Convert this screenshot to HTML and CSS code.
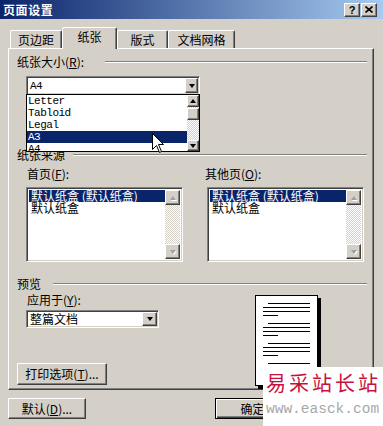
FILE: index.html
```html
<!DOCTYPE html>
<html lang="zh">
<head>
    <meta charset="UTF-8">
    <title>页面设置</title>
    <link rel="stylesheet" href="styles.css">
</head>
<body>
<div class="dialog">
    <div class="titlebar">
        <span class="title">页面设置</span>
        <span class="tbtn">?</span>
        <span class="tbtn">
            <svg width="8" height="7" viewBox="0 0 8 7"><path d="M0.5 0.5 L7.5 6.5 M7.5 0.5 L0.5 6.5" stroke="#000" stroke-width="1.6"/></svg>
        </span>
    </div>

    <div class="tabs">
        <div class="tab t1">页边距</div>
        <div class="tab t2 active">纸张</div>
        <div class="tab t3">版式</div>
        <div class="tab t4">文档网格</div>
    </div>

    <div class="panel">
        <div class="legend"><span class="lg-size">纸张大小(<u>R</u>):</span></div>
        <div class="combo sunken size">
            <span class="mono">A4</span>
            <span class="dropbtn raised"><i class="arr down"></i></span>
            <div class="droplist">
                <ul class="items mono">
                    <li>Letter</li>
                    <li>Tabloid</li>
                    <li>Legal</li>
                    <li class="sel">A3</li>
                    <li>A4</li>
                </ul>
                <div class="vscroll small">
                    <span class="sbtn raised up-btn"><i class="arr up"></i></span>
                    <span class="track gap"></span>
                    <span class="thumb raised"></span>
                    <span class="track"></span>
                    <span class="sbtn raised dn-btn"><i class="arr down"></i></span>
                </div>
            </div>
        </div>

        <div class="legend src"><span class="lg-src">纸张来源</span></div>
        <div class="trays">
            <div class="tray">
                <label>首页(<u>F</u>):</label>
                <div class="listbox sunken">
                    <ul class="items">
                        <li class="sel">默认纸盒 (默认纸盒)</li>
                        <li>默认纸盒</li>
                    </ul>
                    <div class="vscroll">
                        <span class="sbtn raised"><i class="arr up off"></i></span>
                        <span class="track"></span>
                        <span class="sbtn raised"><i class="arr down off"></i></span>
                    </div>
                </div>
            </div>
            <div class="tray right">
                <label>其他页(<u>O</u>):</label>
                <div class="listbox sunken">
                    <ul class="items">
                        <li class="sel">默认纸盒 (默认纸盒)</li>
                        <li>默认纸盒</li>
                    </ul>
                    <div class="vscroll">
                        <span class="sbtn raised"><i class="arr up off"></i></span>
                        <span class="track"></span>
                        <span class="sbtn raised"><i class="arr down off"></i></span>
                    </div>
                </div>
            </div>
        </div>

        <div class="legend pv"><span class="lg-pv">预览</span></div>
        <div class="preview">
            <div class="pv-left">
                <label>应用于(<u>Y</u>):</label>
                <div class="combo sunken apply">
                    <span>整篇文档</span>
                    <span class="dropbtn raised"><i class="arr down"></i></span>
                </div>
                <button class="btn print">打印选项(<u>T</u>)...</button>
            </div>
            <div class="page">
                <div class="para"><i class="ln ind"></i><i class="ln"></i><i class="ln"></i><i class="ln short"></i></div>
                <div class="para"><i class="ln ind"></i><i class="ln"></i><i class="ln"></i><i class="ln short"></i></div>
                <div class="para"><i class="ln ind"></i><i class="ln"></i><i class="ln"></i><i class="ln short"></i></div>
                <div class="para"><i class="ln ind"></i><i class="ln"></i><i class="ln"></i><i class="ln short"></i></div>
            </div>
        </div>
    </div>

    <div class="footer">
        <button class="btn dflt">默认(<u>D</u>)...</button>
        <button class="btn ok">确定</button>
        <button class="btn">取消</button>
    </div>

    <svg class="cursor" width="13" height="21" viewBox="0 0 13 21">
        <path d="M0.5 0.5 L0.5 16.5 L4.5 12.5 L7.5 19.5 L9.5 18.5 L6.5 11.5 L11.5 11.5 Z" fill="#fff" stroke="#000" stroke-width="1"/>
    </svg>

    <div class="watermark">
        <div class="wm-cn">易采站长站</div>
        <div class="wm-en">www.easck.com</div>
    </div>
</div>
</body>
</html>
```

FILE: styles.css
```css
* { box-sizing: border-box; }
body { margin: 0; background: #d4d0c8; font-family: "Noto Sans CJK SC", "Liberation Sans", sans-serif; font-size: 12px; line-height: 12px; color: #000; }
ul { list-style: none; margin: 0; padding: 0; }
u { text-decoration: underline; }

.dialog { position: relative; width: 383px; height: 426px; overflow: hidden; }

/* classic 3d borders */
.raised { background: #d4d0c8; border: 1px solid; border-color: #fff #404040 #404040 #fff; box-shadow: inset -1px -1px #808080; }
.sunken { background: #fff; border: 1px solid; border-color: #808080 #fff #fff #808080; box-shadow: inset 1px 1px #404040, inset -1px -1px #d4d0c8; }

.titlebar { height: 19px; background: linear-gradient(to right, #0a246a, #a6caf0); display: flex; align-items: center; gap: 1px; padding: 0 6px 0 3px; }
.title { flex: 1; color: #fff; font-weight: bold; letter-spacing: 0.6px; }
.tbtn { width: 16px; height: 14px; display: flex; align-items: center; justify-content: center; background: #d4d0c8; border: 1px solid; border-color: #fff #404040 #404040 #fff; box-shadow: inset -1px -1px #808080; font: bold 11px "Liberation Sans", sans-serif; }

.tabs { display: flex; align-items: flex-end; height: 21px; margin-top: 8px; padding-left: 10px; }
.tab { height: 18px; display: flex; align-items: center; justify-content: center; border: 1px solid; border-bottom: none; border-color: #fff #404040 transparent #fff; box-shadow: inset -1px 0 #808080; border-radius: 2px 2px 0 0; padding-top: 1px; }
.t1 { width: 52px; }
.t2 { width: 55px; }
.t3 { width: 51px; }
.t4 { width: 67px; }
.tab.active { height: 22px; margin-bottom: -1px; position: relative; z-index: 1; background: #d4d0c8; padding-top: 0; padding-bottom: 3px; }

.panel { position: relative; width: 366px; height: 342px; margin-left: 8px; border: 1px solid; border-color: #fff #404040 #404040 #fff; box-shadow: inset -1px -1px #808080; padding: 7px 6px 0 8px; }

.legend { display: flex; align-items: center; height: 12px; }
.legend::after { content: ""; flex: 1; border-top: 1px solid #808080; border-bottom: 1px solid #fff; }
.lg-size { width: 88px; }
.lg-src { width: 56px; }
.lg-pv { width: 36px; }
.legend.src { margin-top: 54px; }
.legend.pv { margin-top: 16px; }

.mono { font-family: "Liberation Mono", monospace; font-size: 11px; letter-spacing: -0.5px; }

.combo { position: relative; display: flex; align-items: center; padding-left: 3px; }
.combo.size { width: 174px; height: 19px; margin: 8px 0 0 9px; }
.combo.apply { width: 133px; height: 18px; margin: 4px 0 0 0; }
.dropbtn { margin-left: auto; margin-right: 1px; height: 15px; display: flex; align-items: center; justify-content: center; }
.size .dropbtn { width: 13px; }
.apply .dropbtn { width: 15px; height: 14px; }

.arr { display: block; width: 0; height: 0; border-left: 3.5px solid transparent; border-right: 3.5px solid transparent; }
.arr.down { border-top: 4px solid #000; }
.arr.up { border-bottom: 4px solid #000; }
.arr.off.down { border-top-color: #a0a0a0; filter: drop-shadow(1px 1px 0 #fff); }
.arr.off.up { border-bottom-color: #a0a0a0; filter: drop-shadow(1px 1px 0 #fff); }

.droplist { position: absolute; z-index: 5; top: 17px; left: -1px; width: 174px; height: 58px; background: #fff; border: 1px solid #000; display: flex; overflow: hidden; }
.items { flex: 1; }
.items li { height: 12px; line-height: 12px; padding-left: 2px; white-space: nowrap; }
.items li.sel { background: #0a246a; color: #fff; }
.droplist .items li { padding-left: 1px; }

.vscroll { display: flex; flex-direction: column; width: 15px; }
.vscroll.small { width: 12px; }
.sbtn { display: flex; align-items: center; justify-content: center; height: 15px; flex: none; }
.small .up-btn { height: 12px; }
.small .dn-btn { height: 11px; }
.thumb { height: 12px; flex: none; }
.track { flex: 1; background-image: conic-gradient(#fff 25%, #d4d0c8 0 50%, #fff 0 75%, #d4d0c8 0); background-size: 2px 2px; }
.track.gap { flex: none; height: 1px; }

.trays { display: grid; grid-template-columns: 157px 157px; column-gap: 24px; margin-top: 7px; padding-left: 9px; }
.tray label { display: block; height: 12px; padding-left: 1px; }
.tray.right label { margin-left: -2px; padding-left: 0; }
.listbox { margin-top: 7px; height: 75px; display: flex; padding: 2px; }

.preview { display: flex; margin-top: 4px; }
.pv-left { width: 238px; padding-left: 9px; }
.pv-left label { display: block; height: 12px; padding-left: 1px; }

.btn { display: flex; align-items: center; justify-content: center; height: 21px; padding: 0; font: inherit; color: #000; background: #d4d0c8; border: 1px solid; border-color: #fff #404040 #404040 #fff; box-shadow: inset -1px -1px #808080; }
.btn.print { width: 90px; height: 22px; margin: 35px 0 0 -9px; }

.page { width: 63px; height: 91px; margin-top: 1px; background: #fff; border: 1px solid #000; box-shadow: 3px 3px 0 #000; padding: 7px 0 0 7px; display: flex; flex-direction: column; gap: 7px; overflow: hidden; }
.para { display: flex; flex-direction: column; gap: 3px; }
.ln { display: block; height: 1px; width: 47px; background: #000; }
.ln.ind { width: 42px; margin-left: 5px; }
.ln.short { width: 15px; }

.footer { display: flex; gap: 7px; margin-top: 8px; padding: 0 11px 0 8px; }
.footer .btn { width: 75px; }
.footer .btn.dflt { width: 78px; margin-right: auto; }
.btn.ok { border-color: #000; box-shadow: inset 1px 1px #fff, inset -1px -1px #404040, inset -2px -2px #808080; }

.cursor { position: absolute; left: 152px; top: 133px; z-index: 10; }

.watermark { position: absolute; left: 263px; top: 367px; width: 120px; height: 59px; background: #fff; padding: 4px 0 0 3px; z-index: 20; }
.wm-cn { color: #c8103c; font-size: 20px; line-height: 24px; letter-spacing: 3px; white-space: nowrap; }
.wm-en { margin-top: 6px; color: #a8a8a8; font-family: "Liberation Mono", monospace; font-size: 14.5px; line-height: 16px; white-space: nowrap; }
```
